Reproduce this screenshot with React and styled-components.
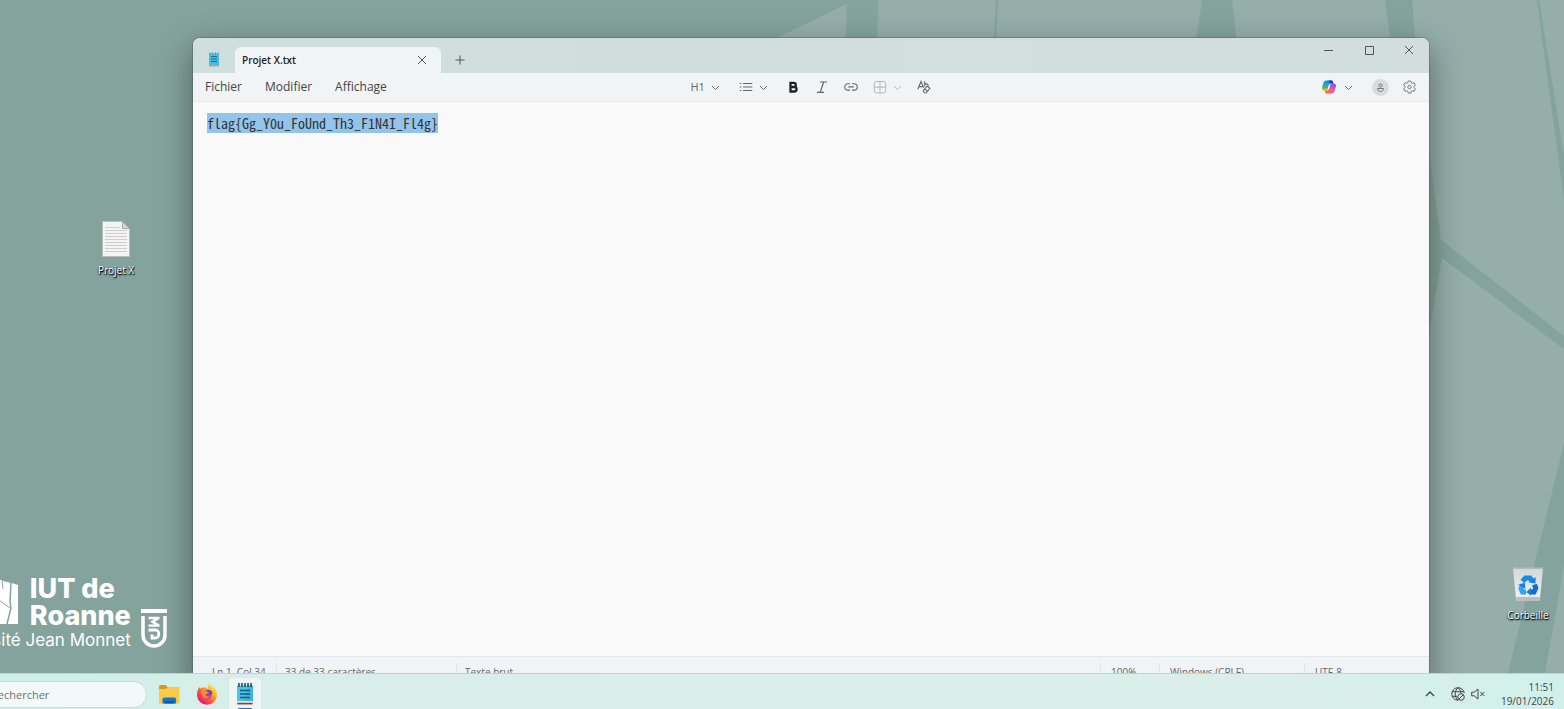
import React, { useEffect, useRef, useState } from "react";
import styled, { createGlobalStyle, css } from "styled-components";

const GlobalStyle = createGlobalStyle`
  * {
    box-sizing: border-box;
  }

  body {
    margin: 0;
    overflow: hidden;
    font-family: "Open Sans", "Noto Sans", sans-serif;
  }

  button {
    border: 0;
    padding: 0;
    background: transparent;
    font: inherit;
    color: inherit;
  }

  svg {
    display: block;
    flex: none;
  }
`

const Screen = styled.div`
  display: flex;
  flex-direction: column;
  height: 100vh;
  background: #84a39c;
`

const Desktop = styled.main`
  position: relative;
  flex: 1;
  min-height: 0;
  overflow: hidden;
`

const Wallpaper = styled.svg`
  width: 100%;
  height: 100%;
`

// everything pinned on the desktop canvas
const Shortcut = styled.button`
  position: absolute;
  display: flex;
  flex-direction: column;
  align-items: center;
  gap: ${props => props.$gap}px;
  width: 70px;
  font-size: 10px;
  line-height: 14px;
  color: #fff;
  text-shadow: 0 1px 2px #000, 1px 1px 1px #000;
`

const ProjectShortcut = styled(Shortcut)`
  top: 220px;
  left: 81px;
`

const BinShortcut = styled(Shortcut)`
  right: 1px;
  bottom: 51px;
`

const Brand = styled.div`
  position: absolute;
  left: -60px;
  bottom: 22px;
  display: flex;
  align-items: flex-end;
  gap: 10px;
  color: #fff;
  font-family: Inter, sans-serif;
`

const BrandText = styled.div`
  display: flex;
  flex-direction: column;
  align-items: flex-end;
`

const BrandTop = styled.div`
  display: flex;
  align-items: center;
  gap: 12px;
`

const BrandName = styled.div`
  font-size: 27px;
  font-weight: 800;
  line-height: 27px;
`

const BrandSub = styled.div`
  font-size: 17px;
  line-height: 22px;
`

const BrandShield = styled.div`
  padding-bottom: 3px;
`

const Window = styled.section`
  position: absolute;
  top: 38px;
  right: 135px;
  bottom: -14px;
  left: 193px;
  display: flex;
  flex-direction: column;
  border-radius: 7px 7px 0 0;
  overflow: hidden;
  background: #f9f9f9;
  color: #333;
  box-shadow: 0 0 0 1px rgba(60, 85, 80, 0.35), 0 12px 32px 2px rgba(0, 0, 0, 0.38);
`

const TitleBar = styled.header`
  display: flex;
  align-items: flex-end;
  height: 35px;
  padding-left: 15px;
  background: linear-gradient(90deg, #cfdfdb, #d3dedc);
`

const AppIcon = styled.div`
  padding: 0 15px 6px 0;
`

const Tab = styled.div`
  display: flex;
  align-items: center;
  justify-content: space-between;
  width: 206px;
  height: 26px;
  padding: 0 14px 0 7px;
  border-radius: 6px 6px 0 0;
  background: #f0f4f6;
  color: #222;
  font-size: 10px;
  font-weight: 600;
`

const NewTab = styled.button`
  display: grid;
  place-items: center;
  width: 38px;
  height: 26px;
`

const Controls = styled.div`
  display: flex;
  align-self: flex-start;
  margin-left: auto;
`

const ControlButton = styled.button`
  display: grid;
  place-items: center;
  width: 40px;
  height: 24px;
`

const MenuBar = styled.nav`
  display: grid;
  grid-template-columns: 1fr auto 1fr;
  align-items: center;
  height: 29px;
  padding: 0 13px 0 12px;
  border-bottom: 1px solid #e8eced;
  background: #f0f4f6;
`

const Menus = styled.div`
  display: flex;
  gap: 23px;
  color: #444;
  font-size: 12px;
  line-height: 16px;
`

const Tools = styled.div`
  display: flex;
  align-items: center;
  gap: ${props => props.$gap}px;
`

const Tool = styled.button`
  display: flex;
  align-items: center;
  gap: 6px;
  color: ${props => (props.disabled ? "#b4b9bb" : "#666")};
`

const Heading = styled.span`
  width: 14px;
  font-size: 11px;
  line-height: 14px;
`

const Account = styled.div`
  display: flex;
  align-items: center;
  justify-content: flex-end;
  gap: 14px;
`

const Copilot = styled(Tool)`
  gap: 8px;
  margin-right: 5px;
`

const Avatar = styled.button`
  display: grid;
  place-items: center;
  width: 17px;
  height: 17px;
  border-radius: 50%;
  background: #d9dcdd;
  color: #777;
`

const Editor = styled.textarea`
  flex: 1;
  width: 100%;
  padding: 13px 14px;
  border: 0;
  outline: 0;
  resize: none;
  background: #f9f9f9;
  color: #222;
  font-family: "Noto Sans Mono CJK SC", "DejaVu Sans Mono", monospace;
  font-size: 14px;
  line-height: 16px;

  &::selection {
    background: #93c4ec;
    color: #333;
  }
`

const StatusBar = styled.footer`
  display: flex;
  align-items: center;
  height: 31px;
  border-top: 1px solid #e3e8ea;
  background: #f0f4f6;
  color: #666;
  font-size: 10px;
`

const StatusItem = styled.span`
  width: ${props => props.$width};
  flex: ${props => (props.$grow ? 1 : "none")};
  padding-left: ${props => props.$pad}px;
  line-height: 18px;
  white-space: nowrap;

  & + & {
    border-left: 1px solid #e1e6e8;
  }
`

const Taskbar = styled.footer`
  display: flex;
  align-items: flex-start;
  justify-content: space-between;
  height: 36px;
  padding-right: 10px;
  border-top: 1px solid #bfd2ce;
  background: linear-gradient(90deg, #cfefe7, #d9eeea 20%, #dbeeea 80%, #d1f0eb);
  overflow: hidden;
`

const TaskGroup = styled.div`
  display: flex;
  align-items: flex-start;
  gap: 6px;
  padding-top: 4px;
`

const Search = styled.input`
  width: 221px;
  height: 27px;
  margin: 3px 0 0 -74px;
  padding: 0 0 0 64px;
  border: 1px solid #cbdcd8;
  border-radius: 14px;
  outline: 0;
  background: #f1faf8;
  font-family: inherit;
  font-size: 11px;

  &::placeholder {
    color: #6b7371;
  }
`

const TaskButton = styled.button`
  display: flex;
  flex-direction: column;
  align-items: center;
  justify-content: space-between;
  width: 32px;
  height: 32px;
  padding-top: 5px;
  border-radius: 4px 4px 0 0;
  background: ${props => (props.$active ? "#edf6f5" : "transparent")};

  ${props => props.$active && css`
    &:after {
      content: "";
      width: 14px;
      height: 2px;
      border-radius: 2px;
      background: #1a73d9;
    }
  `}
`

const Tray = styled.div`
  display: flex;
  align-items: center;
  height: 40px;
  color: #444;
`

const TrayButton = styled.button`
  margin-right: ${props => props.$space}px;
`

const Clock = styled.time`
  font-size: 10px;
  line-height: 14px;
  text-align: right;
`

const Chevron = () => (
  <svg width="9" height="9" viewBox="0 0 9 9" fill="none" stroke="currentColor" strokeWidth="1">
    <path d="M1 3l3.5 3.5L8 3" />
  </svg>
)

const Cross = () => (
  <svg width="10" height="10" viewBox="0 0 10 10" stroke="#555" strokeWidth="1">
    <path d="M1 1l8 8M9 1l-8 8" />
  </svg>
)

const Plus = () => (
  <svg width="10" height="10" viewBox="0 0 10 10" stroke="#555" strokeWidth="1">
    <path d="M5 .5v9M.5 5h9" />
  </svg>
)

const NotepadIcon = ({ width, height }) => (
  <svg width={width} height={height} viewBox="0 0 16 22">
    <rect x="0" y="17" width="16" height="4.6" rx="1" fill="#e9e1dc" />
    <path d="M.3 20.6h15.4" stroke="#a33a2c" strokeWidth="1.6" />
    <path d="M0 2.5h16V18H0z" fill="#4cc2e4" />
    <path d="M11 2.5h5V18H7z" fill="#35a9d4" opacity=".55" />
    <path d="M2 0v4M5 0v4M8 0v4M11 0v4M14 0v4" stroke="#17485f" strokeWidth="1.5" />
    <path d="M3 7.5h10M3 11h10M3 14.5h10" stroke="#125e83" strokeWidth="1.4" />
  </svg>
)

// the small one in the title bar has no dark rings
const NotepadSmallIcon = () => (
  <svg width="12" height="15" viewBox="0 0 12 15">
    <path d="M1 12h10v2.500H1z" fill="#c79f8d" />
    <path d="M1 1.500h10V13H1z" fill="#45bce0" />
    <path d="M2 .500v1.500M4.500.500v1.500M7.500.500v1.500M10 .500v1.500" stroke="#4a8ba3" />
    <path d="M3 4.500h6M3 7h6M3 9.500h6" stroke="#1a6f96" />
  </svg>
)

const ListIcon = () => (
  <svg width="14" height="14" viewBox="0 0 14 14" stroke="currentColor" strokeWidth="1.2">
    <path d="M.7 3.5h1.6M.7 7h1.6M.7 10.5h1.6M4 3.5h9.3M4 7h9.3M4 10.5h9.3" />
  </svg>
)

const BoldIcon = () => (
  <svg width="14" height="14" viewBox="0 0 14 14" fill="none" stroke="#222" strokeWidth="2.3">
    <path d="M4.500 2.800h3.200a2 2 0 010 4.200H4.500zM4.500 7h3.800a2.200 2.200 0 010 4.500H4.500z" />
  </svg>
)

const ItalicIcon = () => (
  <svg width="14" height="14" viewBox="0 0 14 14" stroke="currentColor" strokeWidth="1.2">
    <path d="M5 2h7M2 12.3h7M8.6 2L5.3 12.3" />
  </svg>
)

const LinkIcon = () => (
  <svg width="14" height="14" viewBox="0 0 14 14" fill="none" stroke="currentColor" strokeWidth="1.1">
    <path d="M6 3.7H4a3.2 3.2 0 000 6.4h2M8 3.7h2a3.2 3.2 0 010 6.4H8M4.3 6.9h5.4" />
  </svg>
)

const TableIcon = () => (
  <svg width="14" height="14" viewBox="0 0 14 14" fill="none" stroke="currentColor" strokeWidth="1">
    <rect x="1.3" y="1.5" width="11.4" height="11.4" rx="2" />
    <path d="M7 1.5v11.4M1.3 7.2h11.4" />
  </svg>
)

const ClearFormatIcon = () => (
  <svg width="14" height="14" viewBox="0 0 14 14" fill="none" stroke="currentColor" strokeWidth="1.1">
    <path d="M.8 9.3L4 1.5l2.6 6.3M2 6.6h4M7.7 1.2v5.3M7.7 4.6c1.5-1.5 3.9-.6 3.5 1.3" />
    <path d="M10.2 6l2.7 2.4-3.6 4.2c-.5.6-1.2.6-1.8.1l-.9-.8c-.5-.5-.5-1.1-.1-1.6zM7.6 8.8l3 2.5" />
  </svg>
)

const CopilotIcon = () => (
  <svg width="14" height="14" viewBox="0 0 14 14">
    <defs>
      <linearGradient id="cool" x1=".4" y1="0" x2=".3" y2="1">
        <stop offset="0" stopColor="#1583e6" />
        <stop offset=".35" stopColor="#1aa7d8" />
        <stop offset=".65" stopColor="#3fb45c" />
        <stop offset="1" stopColor="#f0c51e" />
      </linearGradient>
      <linearGradient id="warm" x1=".8" y1="0" x2=".2" y2="1">
        <stop offset="0" stopColor="#7a52e6" />
        <stop offset=".35" stopColor="#c84fd0" />
        <stop offset=".65" stopColor="#ff5f7e" />
        <stop offset="1" stopColor="#ff6a2b" />
      </linearGradient>
    </defs>
    <path d="M4.500.6h4.800c1 0 1.400.6 1.700 1.400l.5 1.600H9c-1 0-1.500.6-1.800 1.500L6 9.200c-.3.900-.8 1.400-1.800 1.400H2C.2 10.600-.2 9 .1 7.500L1.400 3C1.800 1.500 2.900.6 4.500.6z" fill="url(#cool)" />
    <path d="M6.500.6h2.800c1 0 1.400.6 1.700 1.400l.5 1.600H8z" fill="#1540c0" />
    <path d="M9.500 13.400H4.700c-1 0-1.400-.6-1.700-1.400l-.5-1.600H5c1 0 1.500-.6 1.800-1.500L8 4.800c.3-.9.800-1.400 1.800-1.400H12c1.800 0 2.200 1.600 1.900 3.100L12.600 11c-.4 1.500-1.500 2.400-3.100 2.400z" fill="url(#warm)" />
    <path d="M8.500 4.300L6.800 9.600H5.400L7.100 4.300z" fill="#f4f6fa" />
  </svg>
)

const PersonIcon = () => (
  <svg width="9" height="9" viewBox="0 0 9 9" fill="none" stroke="currentColor" strokeWidth="1">
    <circle cx="4.500" cy="2.500" r="1.600" />
    <path d="M1.500 5.500h6c0 4-6 4-6 0z" />
  </svg>
)

const GearIcon = () => (
  <svg width="13" height="14" viewBox="0 0 13 14" fill="none" stroke="#777" strokeWidth="1">
    <path d="M5.200 1h2.600l.4 1.700 1.100.6 1.700-.6L12.400 5l-1.300 1.300v1.400L12.400 9 11 11.300l-1.700-.6-1.100.6L7.800 13H5.200l-.4-1.700-1.100-.6-1.700.6L.6 9l1.300-1.300V6.300L.6 5 2 2.700l1.700.6 1.100-.6z" strokeLinejoin="round" />
    <circle cx="6.500" cy="7" r="1.700" />
  </svg>
)

const TextFileIcon = () => (
  <svg width="28" height="38" viewBox="0 0 28 38">
    <path d="M.5 1.500h20l7 7v28H.5z" fill="#f4f4f4" stroke="#b9bdbb" />
    <path d="M20.500 1.500v7h7z" fill="#d5d8d7" stroke="#a7acaa" />
    <path d="M3 7.500h15M3 10.500h22M3 13.500h22M3 16.500h22M3 19.500h22M3 22.500h22M3 25.500h22M3 28.500h22M3 31.500h22" stroke="#cdcfce" />
  </svg>
)

const BinIcon = () => (
  <svg width="32" height="36" viewBox="0 0 32 36">
    <defs>
      <linearGradient id="bin" x1="0" y1="0" x2="0" y2="1">
        <stop offset="0" stopColor="#d3d8d8" />
        <stop offset="1" stopColor="#f1f2f3" />
      </linearGradient>
    </defs>
    <path d="M1 2h30l-3 31c-.1 1-.8 2-2 2H6c-1.200 0-1.900-1-2-2z" fill="url(#bin)" />
    <path d="M4 31h24l-.3 2.300c-.2 1-.7 1.700-1.700 1.700H6c-1 0-1.700-.7-1.800-1.700z" fill="#b9bec0" />
    <path d="M1 1.500h30v1.600H1z" fill="#b4bcbc" />
    <g fill="none" strokeWidth="5">
      <path d="M10.500 15.500l3-3.500h4.500l2 3" stroke="#1a8ae6" />
      <path d="M22.500 18.500l1.300 3.500-1.800 4h-3.500" stroke="#0d6fd3" />
      <path d="M14 26h-3.500L9 22.500l1.500-3" stroke="#35a3f2" />
    </g>
    <path d="M16.500 16.200l7 1.300.2-6.500zM19 21.800l-4.800 4.300 4.800 3.600zM6 18.800l6.800-2 .7 6z" fill="#1b7fdd" />
  </svg>
)

const FolderIcon = () => (
  <svg width="22" height="22" viewBox="0 0 22 22">
    <path d="M1 3.500c0-.9.600-1.500 1.500-1.500h5L10 4.500V8H1z" fill="#d99a12" />
    <path d="M1 6h7l2-2h10.500c.6 0 1 .4 1 1v14.500c0 .6-.4 1-1 1H2c-.6 0-1-.4-1-1z" fill="#fbc94a" />
    <path d="M4.500 20.500v-4c0-1.200.8-2 2-2h9.600c1.200 0 2 .8 2 2v4z" fill="#1178cf" />
    <path d="M6.500 18h9.700v2.500H6.500z" fill="#0d5ba3" />
  </svg>
)

const FirefoxIcon = () => (
  <svg width="22" height="22" viewBox="0 0 22 22">
    <defs>
      <linearGradient id="fox" x1=".9" y1=".1" x2=".2" y2=".9">
        <stop offset="0" stopColor="#fff04a" />
        <stop offset=".35" stopColor="#ffae22" />
        <stop offset=".65" stopColor="#ff563c" />
        <stop offset="1" stopColor="#e8177c" />
      </linearGradient>
    </defs>
    <path d="M14 .5c.5 2 1.600 2.700 2.500 3.900l.8-.8c2.400 2.300 3.700 5 3.700 8.100a10 10 0 01-20 .2C1 8.600 1.900 6 3.600 4l.8 1.700C5.600 4.600 6.500 4.400 7.500 4.500c2-.3 3 .5 4.200 1C11.700 3.500 12.500 1.500 14 .5z" fill="url(#fox)" />
    <circle cx="11.300" cy="11.200" r="4.300" fill="#8b3ee6" />
    <path d="M5 8c2-1.300 4.500-1 6 .2 1.500.2 2 .7 1.600 1.500-1 1-2.600.8-3 2 .4 1.500 2.200 1.900 3.900 1.100-.8 2.600-4.500 3.500-6.700 1C5 12 4.700 10 5 8z" fill="#ff8a26" />
    <path d="M11.500 8c2.500-.7 4 .8 4 3" fill="none" stroke="#5d35c9" strokeWidth="1.500" />
  </svg>
)

const GlobeIcon = () => (
  <svg width="14" height="14" viewBox="0 0 14 14" fill="none" stroke="currentColor" strokeWidth="1">
    <path d="M7 13.300A6.300 6.300 0 1113.300 6M7 .7C3.300 4 3.300 10 7 13.300M7 .7C8.800 2.300 9.800 4 9.800 6M1.200 4.700h11.600M1.200 9.300H6" />
    <circle cx="10" cy="10" r="3.300" />
    <path d="M7.700 12.300l4.600-4.600" />
  </svg>
)

const MutedIcon = () => (
  <svg width="14" height="14" viewBox="0 0 14 14" fill="none" stroke="currentColor" strokeWidth="1">
    <path d="M.7 5.200h2.500L7 2v10L3.200 8.800H.7zM9.300 5l4 4M13.300 5l-4 4" />
  </svg>
)

const RockLogo = () => (
  <svg width="60" height="48" viewBox="0 0 60 48">
    <path d="M2 4l42-2 16 5v39H2z" fill="#fff" />
    <path d="M44 2l9 2-1 20 1 6-4 16" fill="none" stroke="#84a39c" strokeWidth="1.500" />
    <path d="M38 20l14 10M44 3l1 8" fill="none" stroke="#84a39c" />
  </svg>
)

const ShieldLogo = () => (
  <svg width="26" height="40" viewBox="0 0 26 40">
    <path d="M0 1h26v4H0z" fill="#fff" />
    <path d="M2 8v19a11 11 0 0022 0V8" fill="none" stroke="#fff" strokeWidth="3.500" />
    <path d="M7.500 10h11M18 10l-6.500 3.800 6.500 3.800M18.500 17.600h-11" fill="none" stroke="#fff" strokeWidth="2.400" />
    <path d="M7.500 22h7c4.500 0 4.500 8-.5 8h-3v-3.500" fill="none" stroke="#fff" strokeWidth="2.800" />
  </svg>
)

const DesktopBackground = () => (
  <Wallpaper viewBox="0 0 1564 673" preserveAspectRatio="xMaxYMin slice" aria-hidden="true">
    <path d="M847 4L735 58l109 15zM878 0h686v673H865z" fill="#95aeaa" />
    <path
      d="M996 0h2l-3 60h-2zM1202 0h30l7 60h-46zM1385 0h27l5 60h-24zM1537 0h2l25 156v45zM1425 125l16 115 123 96v13l-122-91-17 97zM1564 443v122l-19 108h-37z"
      fill="#84a39c"
    />
  </Wallpaper>
)

const App = () => {
  const [text, setText] = useState("flag{Gg_Y0u_FoUnd_Th3_F1N4I_Fl4g}")
  const editor = useRef(null)

  useEffect(() => {
    editor.current.focus()
    editor.current.select()
  }, [])

  return (
    <Screen>
      <GlobalStyle />
      <Desktop>
        <DesktopBackground />
        <ProjectShortcut $gap={5}>
          <TextFileIcon />
          Projet X
        </ProjectShortcut>
        <BinShortcut $gap={6}>
          <BinIcon />
          Corbeille
        </BinShortcut>
        <Brand>
          <BrandText>
            <BrandTop>
              <RockLogo />
              <BrandName>IUT de<br />Roanne</BrandName>
            </BrandTop>
            <BrandSub>Université Jean Monnet</BrandSub>
          </BrandText>
          <BrandShield>
            <ShieldLogo />
          </BrandShield>
        </Brand>

        <Window aria-label="Bloc-notes">
          <TitleBar>
            <AppIcon>
              <NotepadSmallIcon />
            </AppIcon>
            <Tab>
              Projet X.txt
              <button aria-label="Fermer l'onglet"><Cross /></button>
            </Tab>
            <NewTab aria-label="Nouvel onglet"><Plus /></NewTab>
            <Controls>
              <ControlButton aria-label="Réduire">
                <svg width="10" height="10" stroke="#555"><path d="M0 5.500h9" /></svg>
              </ControlButton>
              <ControlButton aria-label="Agrandir">
                <svg width="10" height="10" fill="none" stroke="#555"><path d="M1.500 1.500h8v8h-8z" /></svg>
              </ControlButton>
              <ControlButton aria-label="Fermer"><Cross /></ControlButton>
            </Controls>
          </TitleBar>

          <MenuBar>
            <Menus>
              <button>Fichier</button>
              <button>Modifier</button>
              <button>Affichage</button>
            </Menus>
            <Tools $gap={18}>
              <Tools $gap={19}>
                <Tool><Heading>H1</Heading><Chevron /></Tool>
                <Tool aria-label="Liste"><ListIcon /><Chevron /></Tool>
              </Tools>
              <Tools $gap={15}>
                <Tool aria-label="Gras"><BoldIcon /></Tool>
                <Tool aria-label="Italique"><ItalicIcon /></Tool>
                <Tool aria-label="Lien"><LinkIcon /></Tool>
                <Tool aria-label="Tableau" disabled><TableIcon /><Chevron /></Tool>
                <Tool aria-label="Effacer la mise en forme"><ClearFormatIcon /></Tool>
              </Tools>
            </Tools>
            <Account>
              <Copilot aria-label="Copilot"><CopilotIcon /><Chevron /></Copilot>
              <Avatar aria-label="Compte"><PersonIcon /></Avatar>
              <button aria-label="Paramètres"><GearIcon /></button>
            </Account>
          </MenuBar>

          <Editor
            ref={editor}
            aria-label="Éditeur de texte"
            spellCheck={false}
            value={text}
            onChange={e => setText(e.target.value)}
          />

          <StatusBar>
            <StatusItem $pad={19} $width="83px">Ln 1, Col 34</StatusItem>
            <StatusItem $pad={8} $width="180px">33 de 33 caractères</StatusItem>
            <StatusItem $pad={8} $grow>Texte brut</StatusItem>
            <StatusItem $pad={10} $width="59px">100%</StatusItem>
            <StatusItem $pad={10} $width="145px">Windows (CRLF)</StatusItem>
            <StatusItem $pad={10} $width="125px">UTF-8</StatusItem>
          </StatusBar>
        </Window>
      </Desktop>

      <Taskbar>
        <TaskGroup>
          <Search type="search" placeholder="Rechercher" aria-label="Rechercher" />
          <TaskButton aria-label="Explorateur de fichiers"><FolderIcon /></TaskButton>
          <TaskButton aria-label="Firefox"><FirefoxIcon /></TaskButton>
          <TaskButton aria-label="Bloc-notes" $active><NotepadIcon width={16} height={22} /></TaskButton>
        </TaskGroup>
        <Tray>
          <TrayButton aria-label="Icônes masquées" $space={16}>
            <svg width="10" height="10" viewBox="0 0 10 10" fill="none" stroke="currentColor" strokeWidth="1.400">
              <path d="M1 7l4-4 4 4" />
            </svg>
          </TrayButton>
          <TrayButton aria-label="Réseau" $space={6}><GlobeIcon /></TrayButton>
          <TrayButton aria-label="Volume" $space={16}><MutedIcon /></TrayButton>
          <Clock dateTime="2026-01-19T11:51">11:51<br />19/01/2026</Clock>
        </Tray>
      </Taskbar>
    </Screen>
  )
}

export default App;
